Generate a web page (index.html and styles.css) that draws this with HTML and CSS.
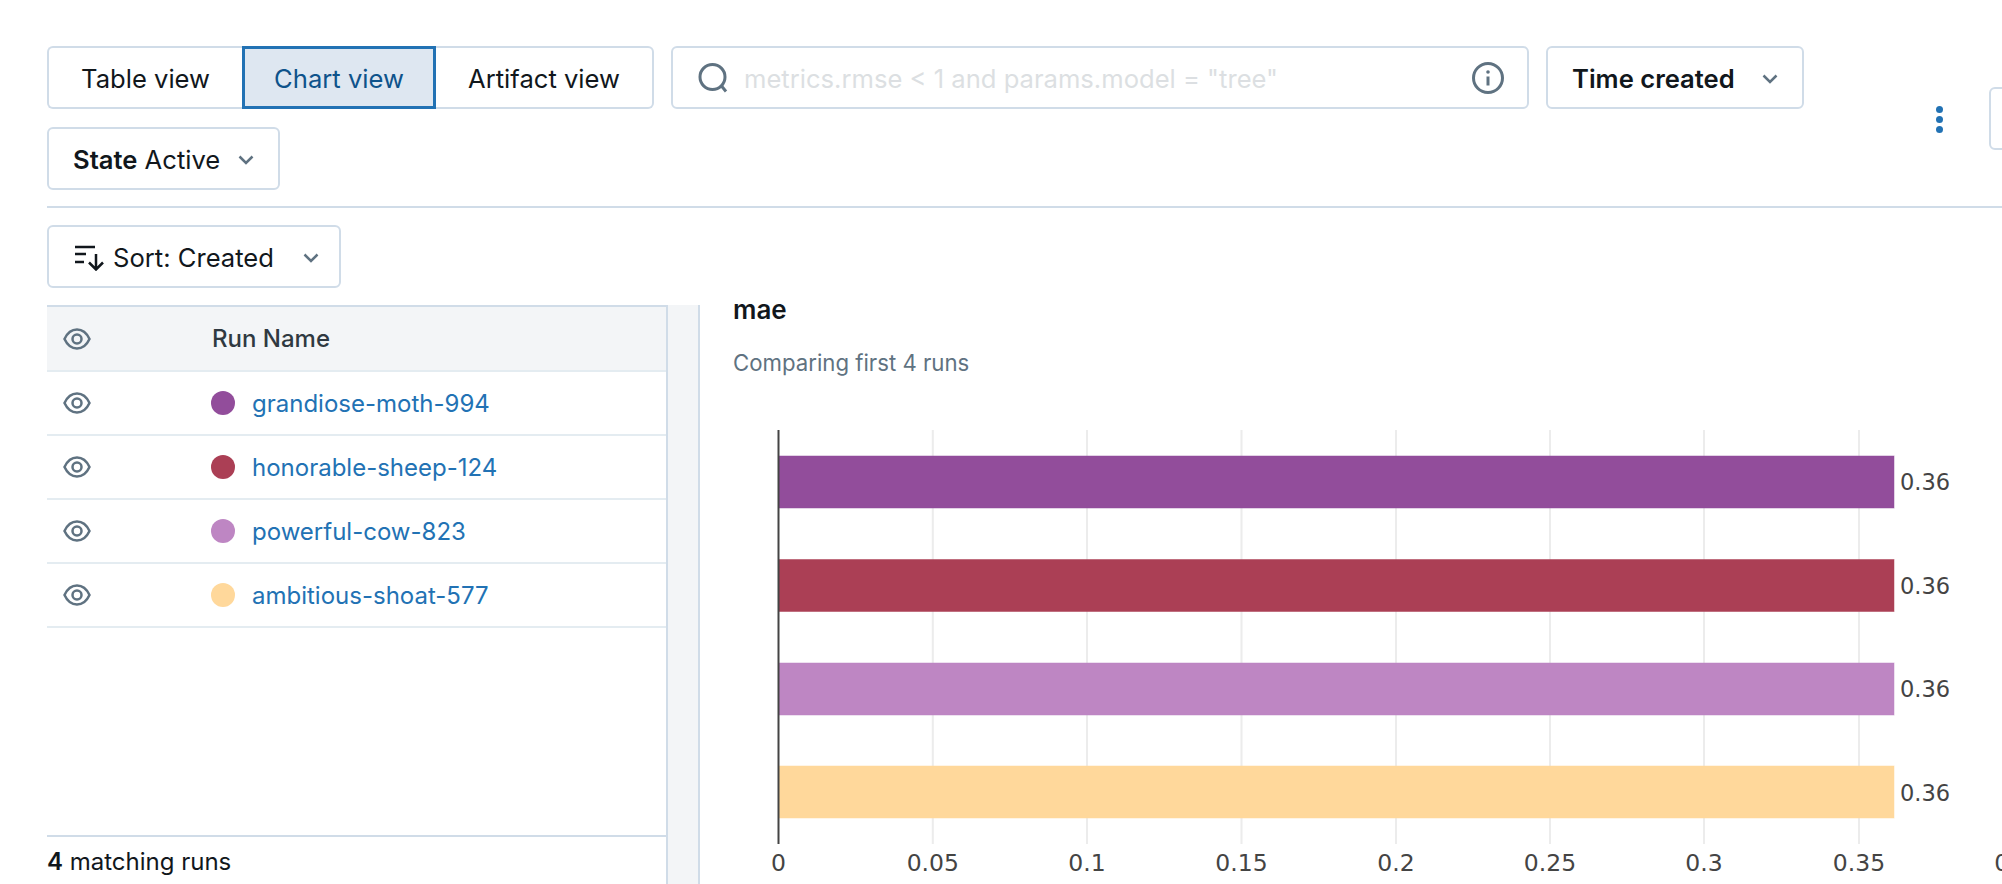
FILE: index.html
```html
<!DOCTYPE html>
<html lang="en">
<head>
    <meta charset="UTF-8">
    <title>Experiment runs</title>
    <link rel="stylesheet" href="styles.css">
</head>
<body>
    <div class="toolbar">
        <div class="filters">
            <div class="view-tabs">
                <button class="tab tab-first">Table view</button>
                <button class="tab tab-active">Chart view</button>
                <button class="tab tab-last">Artifact view</button>
            </div>
            <div class="search">
                <svg class="search-icon" viewBox="0 0 30 30">
                    <circle cx="14.5" cy="14" r="12.5" />
                    <path d="M23.5 23l4.500 5.500" />
                </svg>
                <input class="search-input" type="text" placeholder='metrics.rmse &lt; 1 and params.model = "tree"'>
                <svg class="info-icon" viewBox="0 0 32 32">
                    <circle cx="16" cy="16" r="14.500" />
                    <path d="M16 14.500v9" />
                    <circle class="info-dot" cx="16" cy="10" r="1.800" />
                </svg>
            </div>
            <button class="select select-time"><b>Time created</b>
                <svg class="chevron" viewBox="0 0 16 10"><path d="M1.500 1.500L8 8l6.500-6.500" /></svg>
            </button>
            <button class="select select-state"><span><b>State</b> Active</span>
                <svg class="chevron" viewBox="0 0 16 10"><path d="M1.500 1.500L8 8l6.500-6.500" /></svg>
            </button>
        </div>
        <div class="actions">
            <div class="more-dots"><i></i><i></i><i></i></div>
            <div class="cut-button"></div>
        </div>
    </div>

    <div class="sortbar">
        <button class="select select-sort">
            <svg class="sort-icon" viewBox="0 0 29 26">
                <path d="M0 2h20M0 9h11M0 17h9" />
                <path d="M21 9v15M14 17.500l7 7 7-7" />
            </svg>
            <span class="sort-label">Sort: Created</span>
            <svg class="chevron" viewBox="0 0 16 10"><path d="M1.500 1.500L8 8l6.500-6.500" /></svg>
        </button>
    </div>

    <div class="content">
        <div class="runs">
            <div class="run-row run-head">
                <svg class="eye" viewBox="0 0 28 22"><path d="M1.500 11C4.500 4.500 9 1.500 14 1.500S23.500 4.500 26.500 11C23.500 17.500 19 20.500 14 20.500S4.500 17.500 1.500 11z" /><circle cx="14" cy="11" r="4.500" /></svg>
                <span class="head-name">Run Name</span>
            </div>
            <div class="run-row">
                <svg class="eye" viewBox="0 0 28 22"><path d="M1.500 11C4.500 4.500 9 1.500 14 1.500S23.500 4.500 26.500 11C23.500 17.500 19 20.500 14 20.500S4.500 17.500 1.500 11z" /><circle cx="14" cy="11" r="4.500" /></svg>
                <span class="run-dot dot-moth"></span>
                <a class="run-link">grandiose-moth-994</a>
            </div>
            <div class="run-row">
                <svg class="eye" viewBox="0 0 28 22"><path d="M1.500 11C4.500 4.500 9 1.500 14 1.500S23.500 4.500 26.500 11C23.500 17.500 19 20.500 14 20.500S4.500 17.500 1.500 11z" /><circle cx="14" cy="11" r="4.500" /></svg>
                <span class="run-dot dot-sheep"></span>
                <a class="run-link">honorable-sheep-124</a>
            </div>
            <div class="run-row">
                <svg class="eye" viewBox="0 0 28 22"><path d="M1.500 11C4.500 4.500 9 1.500 14 1.500S23.500 4.500 26.500 11C23.500 17.500 19 20.500 14 20.500S4.500 17.500 1.500 11z" /><circle cx="14" cy="11" r="4.500" /></svg>
                <span class="run-dot dot-cow"></span>
                <a class="run-link">powerful-cow-823</a>
            </div>
            <div class="run-row">
                <svg class="eye" viewBox="0 0 28 22"><path d="M1.500 11C4.500 4.500 9 1.500 14 1.500S23.500 4.500 26.500 11C23.500 17.500 19 20.500 14 20.500S4.500 17.500 1.500 11z" /><circle cx="14" cy="11" r="4.500" /></svg>
                <span class="run-dot dot-shoat"></span>
                <a class="run-link">ambitious-shoat-577</a>
            </div>
            <div class="runs-footer"><b>4</b> matching runs</div>
        </div>
        <div class="gutter"></div>
        <div class="chart-card">
            <h3 class="chart-title">mae</h3>
            <p class="chart-sub">Comparing first 4 runs</p>
            <svg class="chart" width="1302" height="464" viewBox="700 420 1302 464">
                <g class="grid">
                    <path d="M932.800 430V844M1087 430V844M1241.500 430V844M1396 430V844M1550 430V844M1704 430V844M1859 430V844" />
                </g>
                <rect class="bar" x="779" y="456" width="1115" height="52" fill="#924d9b" stroke="#924d9b" />
                <rect class="bar" x="779" y="559.500" width="1115" height="52" fill="#ab3f55" stroke="#ab3f55" />
                <rect class="bar" x="779" y="663" width="1115" height="52" fill="#be86c3" stroke="#be86c3" />
                <rect class="bar" x="779" y="766" width="1115" height="52" fill="#ffd89b" stroke="#ffd89b" />
                <path class="axis" d="M778.500 430V844" />
                <g class="bar-values">
                    <text x="1900" y="490">0.36</text>
                    <text x="1900" y="593.500">0.36</text>
                    <text x="1900" y="697">0.36</text>
                    <text x="1900" y="800.500">0.36</text>
                </g>
                <g class="ticks">
                    <text x="778.500" y="871">0</text>
                    <text x="932.800" y="871">0.05</text>
                    <text x="1087" y="871">0.1</text>
                    <text x="1241.500" y="871">0.15</text>
                    <text x="1396" y="871">0.2</text>
                    <text x="1550" y="871">0.25</text>
                    <text x="1704" y="871">0.3</text>
                    <text x="1859" y="871">0.35</text>
                    <text x="2013" y="871">0.4</text>
                </g>
            </svg>
        </div>
    </div>
</body>
</html>
```

FILE: styles.css
```css
* {
    box-sizing: border-box;
}
html, body {
    height: 100%;
}
body {
    margin: 0;
    background-color: #ffffff;
    color: #11171c;
    font-family: Inter, "Noto Sans", sans-serif;
    font-size: 24px;
    overflow: hidden;
    display: flex;
    flex-direction: column;
}
button {
    font-family: inherit;
    font-size: 25.600px;
    color: #11171c;
    background: #ffffff;
    cursor: pointer;
}
b {
    font-weight: 600;
}

/* top bar */
.toolbar {
    display: flex;
    align-items: center;
    margin-left: 47px;
    padding: 46px 0 16px 0;
    border-bottom: 2px solid #d0dce8;
}
.filters {
    display: flex;
    flex-wrap: wrap;
    gap: 18px 17px;
    width: 1758px;
    flex-shrink: 0;
}
.view-tabs {
    display: flex;
}
.tab {
    height: 63px;
    border: 2px solid #d0dce8;
    border-left: none;
    border-right: none;
    padding: 2px 0 0 0;
}
.tab-first {
    width: 195px;
    border-left: 2px solid #d0dce8;
    border-radius: 6px 0 0 6px;
}
.tab-active {
    width: 194px;
    border: 3px solid #2272b4;
    background: #dee7f1;
    color: #0e538b;
}
.tab-last {
    width: 218px;
    border-right: 2px solid #d0dce8;
    border-radius: 0 6px 6px 0;
}
.search {
    display: flex;
    align-items: center;
    width: 858px;
    height: 63px;
    padding: 0 23px 0 25px;
    border: 2px solid #d0dce8;
    border-radius: 6px;
}
.search-icon {
    width: 30px;
    height: 30px;
    flex-shrink: 0;
    fill: none;
    stroke: #5f7281;
    stroke-width: 3;
}
.search-input {
    flex: 1;
    min-width: 0;
    margin: 2px 14px 0 16px;
    padding: 0;
    border: none;
    outline: none;
    font-family: inherit;
    font-size: 25.600px;
}
.search-input::placeholder {
    color: #dcdfe2;
    opacity: 1;
}
.info-icon {
    width: 32px;
    height: 32px;
    flex-shrink: 0;
    fill: none;
    stroke: #5f7281;
    stroke-width: 3;
}
.info-dot {
    fill: #5f7281;
    stroke: none;
}
.select {
    display: flex;
    align-items: center;
    justify-content: space-between;
    height: 63px;
    border: 2px solid #d0dce8;
    border-radius: 6px;
    padding: 2px 24px 0 24px;
}
.select-time {
    width: 258px;
}
.select-state {
    width: 233px;
}
.chevron {
    width: 16px;
    height: 10px;
    flex-shrink: 0;
    fill: none;
    stroke: #5f7281;
    stroke-width: 2.500;
}
.actions {
    display: flex;
    align-items: center;
    gap: 46px;
    margin-left: 131px;
}
.more-dots {
    display: flex;
    flex-direction: column;
    gap: 3.400px;
    margin-top: 3px;
}
.more-dots i {
    display: block;
    width: 7px;
    height: 7px;
    border-radius: 50%;
    background: #2272b4;
}
.cut-button {
    width: 60px;
    height: 63px;
    border: 2px solid #d0dce8;
    border-radius: 6px;
    flex-shrink: 0;
}

/* sort row */
.sortbar {
    padding: 17px 0 17px 47px;
}
.select-sort {
    width: 294px;
    padding: 2px 20px 0 26px;
}
.sort-icon {
    width: 29px;
    height: 26px;
    flex-shrink: 0;
    fill: none;
    stroke: #11171c;
    stroke-width: 2.500;
}
.sort-label {
    margin-left: 9px;
    margin-right: auto;
}

/* runs table and chart */
.content {
    flex: 1;
    min-height: 0;
    display: flex;
    margin-left: 47px;
}
.runs {
    width: 621px;
    flex-shrink: 0;
    display: flex;
    flex-direction: column;
    border-top: 2px solid #d0dce8;
    border-right: 2px solid #d0dce8;
}
.run-row {
    display: flex;
    align-items: center;
    height: 64px;
    padding-left: 16px;
    border-bottom: 2px solid #e4ecf1;
    flex-shrink: 0;
}
.run-head {
    height: 65px;
    background: #f3f5f7;
}
.eye {
    width: 28px;
    height: 22px;
    flex-shrink: 0;
    fill: none;
    stroke: #5f7281;
    stroke-width: 2.500;
}
.head-name {
    margin-left: 121px;
    font-weight: 500;
    color: #2f3941;
}
.run-dot {
    width: 24px;
    height: 24px;
    margin-left: 120px;
    border-radius: 50%;
    flex-shrink: 0;
}
.dot-moth { background: #924d9b; }
.dot-sheep { background: #ab3f55; }
.dot-cow { background: #be86c3; }
.dot-shoat { background: #ffd89b; }
.run-link {
    margin-left: 17px;
    color: #2272b4;
}
.runs-footer {
    margin-top: auto;
    height: 49px;
    line-height: 50px;
    border-top: 2px solid #d0dce8;
}
.gutter {
    width: 32px;
    flex-shrink: 0;
    background: #f3f5f7;
    border-right: 2px solid #d0dce8;
}
.chart-card {
    flex: 1;
    min-width: 0;
}
.chart-title {
    margin: -9px 0 0 33px;
    font-size: 26px;
    line-height: 28px;
    font-weight: 600;
}
.chart-sub {
    margin: 25px 0 0 33px;
    font-size: 22.200px;
    line-height: 28px;
    color: #5f7281;
}
.chart {
    display: block;
    margin-top: 43px;
    font-family: "DejaVu Sans", sans-serif;
}
.grid path {
    fill: none;
    stroke: #ececec;
    stroke-width: 2;
}
.axis {
    fill: none;
    stroke: #444444;
    stroke-width: 2;
}
.bar {
    stroke-opacity: 0.5;
    stroke-width: 1;
}
.bar-values text {
    font-size: 22.500px;
    fill: #444444;
}
.ticks text {
    font-size: 23.500px;
    fill: #444444;
    text-anchor: middle;
}
```
